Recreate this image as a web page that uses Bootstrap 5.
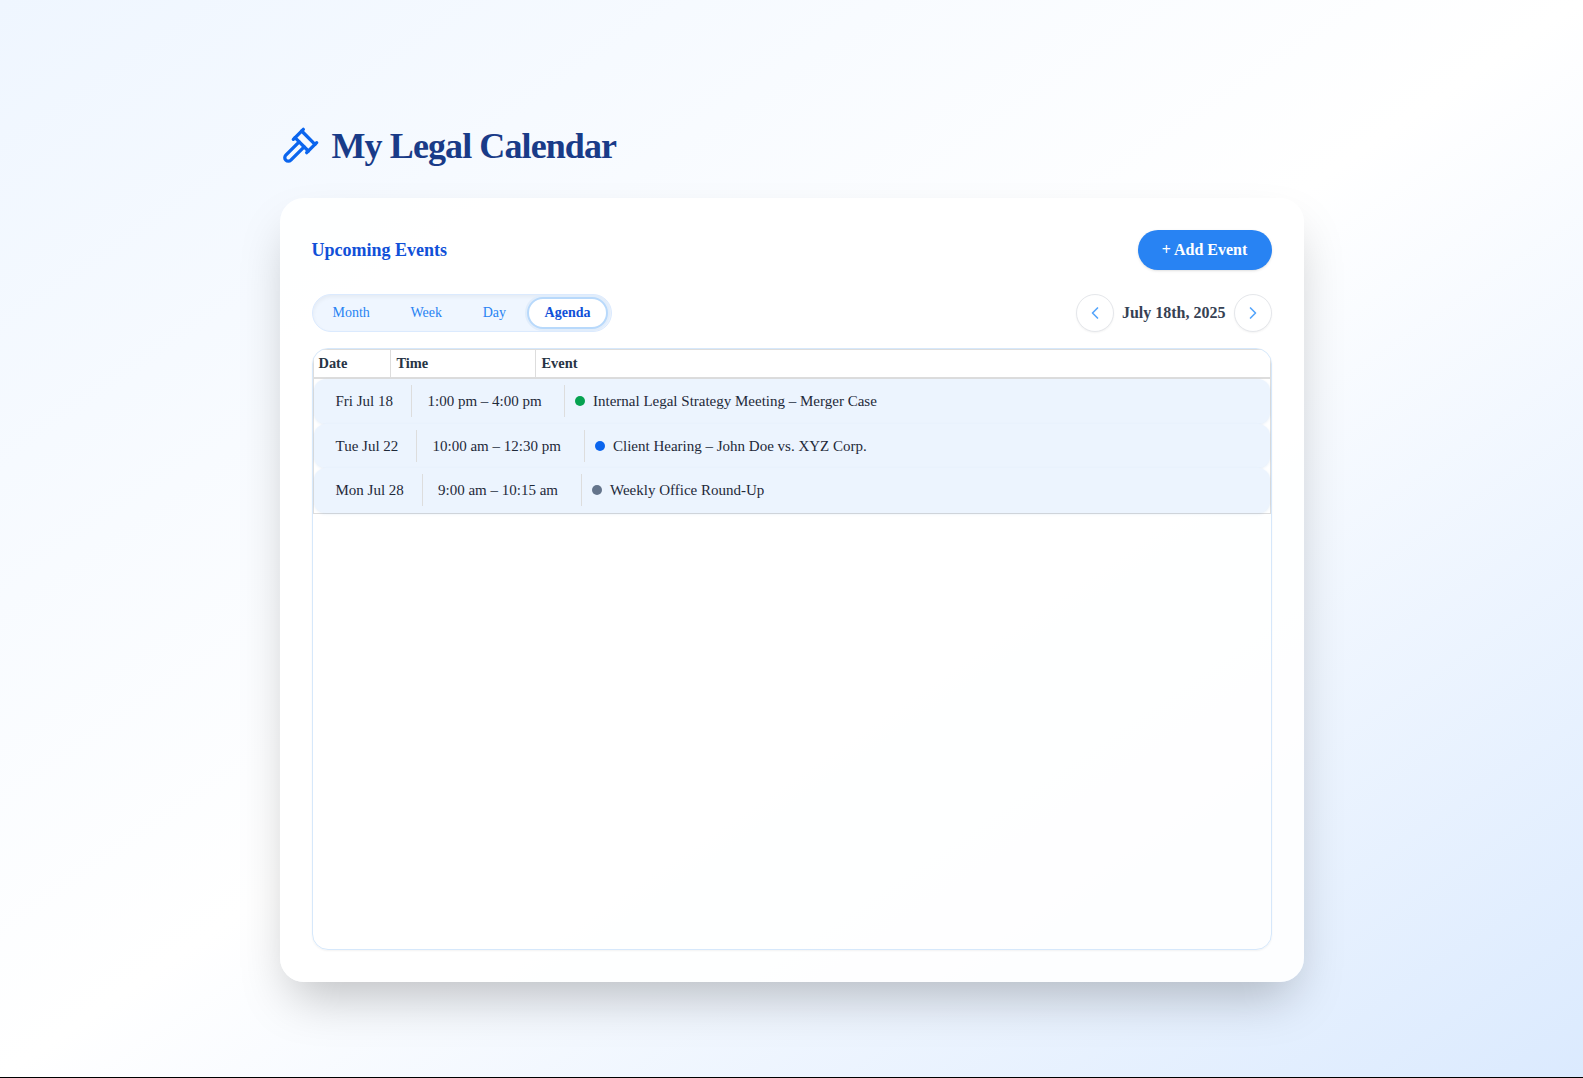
<!DOCTYPE html>
<html lang="en">
<head>
<meta charset="utf-8">
<meta name="viewport" content="width=device-width, initial-scale=1">
<title>My Legal Calendar</title>
<link href="https://cdn.jsdelivr.net/npm/bootstrap@5.3.0/dist/css/bootstrap.min.css" rel="stylesheet">
<style>
body{font-family:"Liberation Serif","Times New Roman",serif;background:#000;color:#1e2939;line-height:1.5}
.page{height:1077px;padding-top:119px;background:linear-gradient(to bottom right,#eff6ff,#fff 50%,#dbeafe)}
.shell{width:1024px}
.brand-row{height:54px;gap:12px;margin-bottom:25px}
.brand-row h1{font-size:36px;line-height:40px;font-weight:700;color:#193b88;letter-spacing:-.9px}
.panel{height:784px;padding:32px;border-radius:24px;background:rgba(255,255,255,.9);box-shadow:0 25px 50px -12px rgba(0,0,0,.25)}
.panel h2{font-size:18px;font-weight:700;color:#1050d8;padding-top:2px}
.add-btn{width:134px;height:40px;background:#2883f3;color:#fff;font-weight:700;font-size:16px;box-shadow:0 1px 3px rgba(0,0,0,.1),0 1px 2px -1px rgba(0,0,0,.1)}
.add-btn:hover{background:#155dfc;color:#fff}
.views{height:38px;width:300px;padding:2px 2px 2px 0;border:1px solid #dbeafe;background:#eff6ff;box-shadow:inset 0 2px 4px rgba(0,0,0,.05)}
.views .btn{font-size:14px;line-height:20px;color:#2883f3;padding:0 18px;border:2px solid transparent;height:32px;border-radius:50rem}
.views .btn.active{background:#fff;border-color:#b8d9fb;color:#1050d8;font-weight:700;padding:0 16px;box-shadow:0 0 0 2px #e1edfb}
.step{width:38px;height:38px;border:1px solid #e5e7eb;background:#fff;color:#55a5fb;box-shadow:0 1px 2px rgba(0,0,0,.05)}
.day-label{font-size:16px;font-weight:700;color:#364153}
.agenda{height:602px;margin-top:16px;border:1px solid #d6e8fb;border-radius:16px;background:transparent;box-shadow:0 1px 2px rgba(0,0,0,.05)}
.sheet{border:1px solid #ddd}
.sheet-head{height:29px;border-bottom:2px solid #ddd;font-size:14.4px;font-weight:700;color:#273444}
.sheet-head>div{padding:3px 5px;line-height:21px}
.sheet-head>div+div{border-left:1px solid #ddd;padding-left:6px}
.entry{border-radius:12px;background:#ecf4fe;height:44px;padding:6px 0 6px 16px;font-size:15px;box-shadow:0 1px 3px rgba(0,90,180,.1)}
.entry>div{line-height:32px;height:32px;white-space:nowrap}
.entry>div+div{border-left:1px solid #ddd}
.dot{width:10px;height:10px;margin:0 8.5px 0 10px}
</style>
<script src="https://cdn.jsdelivr.net/npm/bootstrap@5.3.0/dist/js/bootstrap.bundle.min.js"></script>
</head>
<body>
<main class="page">
<div class="shell mx-auto">
  <header class="brand-row d-flex align-items-center">
    <svg width="40" height="40" viewBox="0 0 24 24" fill="none" stroke="#0b65ee" stroke-width="2" stroke-linecap="round" stroke-linejoin="round"><path d="m14.5 12.5-8 8a2.119 2.119 0 1 1-3-3l8-8"/><path d="m16 16 6-6"/><path d="m8 8 6-6"/><path d="m9 7 8 8"/><path d="m21 11-8-8"/></svg>
    <h1 class="m-0">My Legal Calendar</h1>
  </header>
  <section class="panel">
    <div class="d-flex justify-content-between align-items-center mb-4">
      <h2 class="m-0">Upcoming Events</h2>
      <button class="btn add-btn rounded-pill border-0 p-0">+ Add Event</button>
    </div>
    <div class="d-flex justify-content-between align-items-center">
      <div class="views d-flex align-items-center justify-content-between rounded-pill">
        <button class="btn">Month</button><button class="btn">Week</button><button class="btn">Day</button><button class="btn active">Agenda</button>
      </div>
      <div class="d-flex align-items-center gap-2">
        <button class="btn step rounded-circle p-0 d-flex align-items-center justify-content-center" aria-label="Previous"><svg width="20" height="20" viewBox="0 0 24 24" fill="none" stroke="currentColor" stroke-width="2" stroke-linecap="round" stroke-linejoin="round"><path d="m15 18-6-6 6-6"/></svg></button>
        <span class="day-label">July 18th, 2025</span>
        <button class="btn step rounded-circle p-0 d-flex align-items-center justify-content-center" aria-label="Next"><svg width="20" height="20" viewBox="0 0 24 24" fill="none" stroke="currentColor" stroke-width="2" stroke-linecap="round" stroke-linejoin="round"><path d="m9 18 6-6-6-6"/></svg></button>
      </div>
    </div>
    <div class="agenda overflow-hidden">
      <div class="sheet">
        <div class="sheet-head d-flex"><div style="width:76px">Date</div><div style="width:145px">Time</div><div class="flex-grow-1">Event</div></div>
        <div class="entry d-flex" style="height:45px"><div style="width:81px;padding-left:6px">Fri Jul 18</div><div style="width:153px;padding-left:16px">1:00 pm – 4:00 pm</div><div class="d-flex align-items-center"><span class="dot rounded-circle" style="background:#06a250"></span>Internal Legal Strategy Meeting – Merger Case</div></div>
        <div class="entry d-flex"><div style="width:86px;padding-left:6px">Tue Jul 22</div><div style="width:168px;padding-left:16px">10:00 am – 12:30 pm</div><div class="d-flex align-items-center"><span class="dot rounded-circle" style="background:#0b65ee"></span>Client Hearing – John Doe vs. XYZ Corp.</div></div>
        <div class="entry d-flex" style="height:45px"><div style="width:92px;padding-left:6px">Mon Jul 28</div><div style="width:159px;padding-left:15.5px">9:00 am – 10:15 am</div><div class="d-flex align-items-center"><span class="dot rounded-circle" style="background:#64748b"></span>Weekly Office Round-Up</div></div>
      </div>
    </div>
  </section>
</div>
</main>
</body>
</html>
